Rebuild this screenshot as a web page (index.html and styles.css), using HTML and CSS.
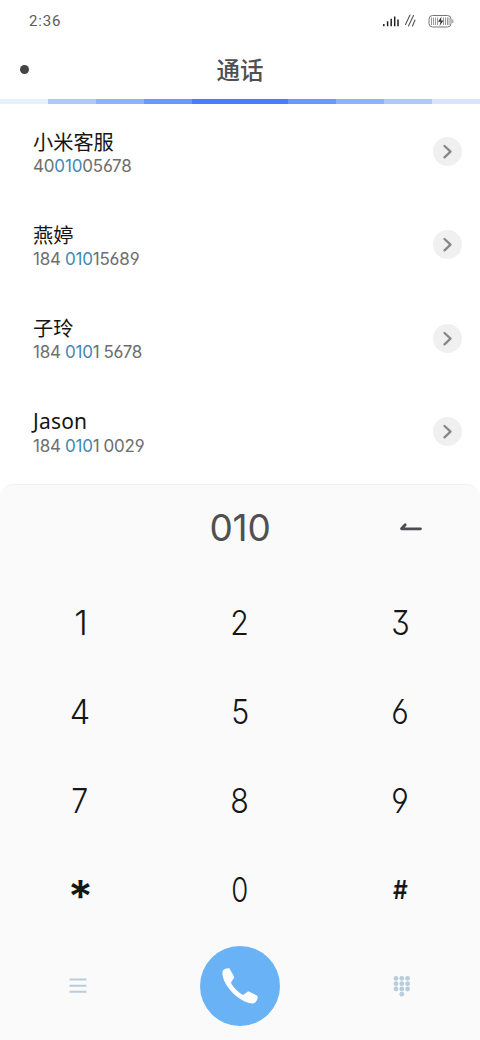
FILE: index.html
```html
<!DOCTYPE html>
<html lang="zh-CN">
<head>
<meta charset="utf-8">
<title>通话</title>
<link rel="stylesheet" href="styles.css">
</head>
<body>
<div class="phone">
  <div class="status">
    <span class="time">2:36</span>
    <svg class="status-icons" width="72" height="16" viewBox="0 0 72 16">
      <path d="M1.800 13.300V11M5.600 13.300V8.200M9.200 13.300V5.800M12.700 13.300V3.500M16 13.300V6.500" stroke="#222" stroke-width="1.500" fill="none"/>
      <path d="M23.500 11.500 28 2M26.500 13 31.500 2.500M30.500 13 33 7" stroke="#555" stroke-width="1.100" fill="none" stroke-linecap="round"/>
      <rect x="47" y="2.500" width="22" height="11.500" rx="3.500" fill="#fff" stroke="#777" stroke-width="1"/>
      <path d="M49.500 4.500V12M51.500 4.500V12M53.500 4.500V12M55.500 4.500V12M61.500 4.500V12M63.500 4.500V12M65.500 4.500V12M67 4.500V12" stroke="#999" stroke-width="1"/>
      <path d="M59.500 3.500 56 8.700H58.500L57.500 13 61.500 7.500H59Z" fill="#333"/>
      <path d="M70.800 6.500V10" stroke="#888" stroke-width="1"/>
    </svg>
  </div>
  <header class="header">
    <span class="dot"></span>
    <h1>通话</h1>
  </header>
  <div class="strip"><i class="s1"></i><i class="s2"></i><i class="s3"></i><i class="s4"></i><i class="s5"></i><i class="s5"></i><i class="s4"></i><i class="s3"></i><i class="s2"></i><i class="s6"></i></div>
  <ul class="contacts">
    <li><div class="who"><p class="name">小米客服</p><p class="number">40<b>010</b>05678</p></div><span class="go"><svg width="29" height="29" viewBox="0 0 29 29"><path d="M11.500 9 17.500 14.700 11.500 20.400"/></svg></span></li>
    <li><div class="who"><p class="name">燕婷</p><p class="number">184 <b>010</b>15689</p></div><span class="go"><svg width="29" height="29" viewBox="0 0 29 29"><path d="M11.500 9 17.500 14.700 11.500 20.400"/></svg></span></li>
    <li><div class="who"><p class="name">子玲</p><p class="number">184 <b>010</b>1 5678</p></div><span class="go"><svg width="29" height="29" viewBox="0 0 29 29"><path d="M11.500 9 17.500 14.700 11.500 20.400"/></svg></span></li>
    <li><div class="who"><p class="name latin">Jason</p><p class="number">184 <b>010</b>1 0029</p></div><span class="go"><svg width="29" height="29" viewBox="0 0 29 29"><path d="M11.500 9 17.500 14.700 11.500 20.400"/></svg></span></li>
  </ul>
  <section class="dialer">
    <div class="entry">
      <span class="typed">010</span>
      <svg class="back" width="24" height="12" viewBox="0 0 24 12"><path d="M6.200 2.700 2.500 6.800H21.500" fill="none" stroke="#4b4d50" stroke-width="2.800" stroke-linecap="round" stroke-linejoin="round"/></svg>
    </div>
    <div class="keys">
      <span><em class="one">1</em></span><span><em>2</em></span><span><em>3</em></span>
      <span><em class="four">4</em></span><span><em>5</em></span><span><em>6</em></span>
      <span><em>7</em></span><span><em>8</em></span><span><em>9</em></span>
      <span><em class="star">*</em></span><span><em class="zero">0</em></span><span><em class="hash">#</em></span>
    </div>
    <div class="actions">
      <svg class="menu" width="18" height="16" viewBox="0 0 18 16"><path d="M.5 1.500H17.500M.5 7.700H17.500M.5 13.700H17.500" stroke="#b7cddb" stroke-width="2"/></svg>
      <span class="call"><svg width="36" height="36" viewBox="0 0 36 36"><path d="M1 2.300C2.500.7 5.500-.2 7.400.3L12.400 9.200 8.900 14.700C11.300 19.200 16.500 24.500 21 27L26.300 23.200 35.300 27.700C36.600 29.300 34.800 33.500 32.500 34.900C29.800 36.300 23 34.800 15.500 29.100C7.500 23 1.100 13.500.5 6.500C.4 4.800.3 3.200 1 2.300Z" fill="#fff"/></svg></span>
      <svg class="pad" width="18" height="22" viewBox="0 0 18 22" fill="#b7cddb"><circle cx="3" cy="3.300" r="2.400"/><circle cx="8.800" cy="3.300" r="2.400"/><circle cx="14.600" cy="3.300" r="2.400"/><circle cx="3" cy="8.700" r="2.400"/><circle cx="8.800" cy="8.700" r="2.400"/><circle cx="14.600" cy="8.700" r="2.400"/><circle cx="3" cy="14" r="2.400"/><circle cx="8.800" cy="14" r="2.400"/><circle cx="14.600" cy="14" r="2.400"/><circle cx="8.800" cy="19.200" r="2.400"/></svg>
    </div>
  </section>
</div>
</body>
</html>
```

FILE: styles.css
```css
* { box-sizing: border-box; margin: 0; padding: 0; }
body { background: #fff; font-family: Inter, "Noto Sans CJK SC", sans-serif; }
.phone { width: 480px; height: 1040px; display: flex; flex-direction: column; background: #fff; }
.status { height: 42px; padding: 0 26px 0 29px; display: flex; justify-content: space-between; align-items: center; }
.time { font: 450 15px/20px Roboto, sans-serif; letter-spacing: .8px; color: #5c5c5c; }
.status-icons { margin-top: -1px; }
.header { height: 57px; display: grid; grid-template-columns: 1fr auto 1fr; align-items: center; padding-bottom: 3px; }
.dot { width: 9px; height: 9px; border-radius: 50%; background: #444; margin-left: 20px; }
.header h1 { font: 500 23.500px/34px "Noto Sans CJK SC", sans-serif; color: #505050; }
.strip { height: 5px; margin-bottom: 1px; display: grid; grid-template-columns: repeat(10, 1fr); }
.s1 { background: #e8f0fe; }
.s2 { background: #afc9fe; }
.s3 { background: #8eb2fd; }
.s4 { background: #6a99fc; }
.s5 { background: #457ffa; }
.s6 { background: #d9e5fe; }
.contacts { list-style: none; height: 379px; }
.contacts li { height: 93.300px; padding: 0 18px 0 33px; display: flex; justify-content: space-between; align-items: center; }
.who { padding-top: 3px; }
.name { font: 400 20.200px/26px "Noto Sans CJK SC", sans-serif; color: #151515; }
.latin { font-family: "Noto Sans", sans-serif; font-size: 21px; line-height: 24px; padding-bottom: 2px; letter-spacing: .2px; }
.number { font: 400 17px/23px Inter, sans-serif; letter-spacing: -.18px; color: #6e6e6e; white-space: pre; font-feature-settings: "cv03", "cv04"; word-spacing: -.6px; }
.number b { font-weight: 400; color: #4487b4; }
.go { width: 29px; height: 29px; border-radius: 50%; background: #f0f0f0; }
.go svg { display: block; }
.go path { fill: none; stroke: #888; stroke-width: 2.300; stroke-linecap: round; stroke-linejoin: round; }
.dialer { height: 556px; background: #fafafa; border-top: 1px solid #f1f1f1; border-radius: 14px 14px 0 0; }
.entry { height: 93px; display: grid; grid-template-columns: 180px 120px 180px; align-items: center; padding-bottom: 7px; }
.typed { grid-column: 2; text-align: center; font: 400 37px/44px Inter, sans-serif; letter-spacing: -.2px; color: #505050; }
.back { margin-left: 99px; }
.keys { display: grid; grid-template-columns: 160px 160px 160px; grid-auto-rows: 89px; }
.keys span { display: flex; align-items: center; justify-content: center; }
.keys em { font: 350 34.500px/40px Inter, sans-serif; font-feature-settings: "cv03", "cv04", "cv09"; transform: scaleX(.88); color: #161616; }
.keys .one { transform: translateX(1px); }
.keys .four { transform: scaleX(.94); }
.keys .zero { transform: scaleX(.8); }
.keys .star { font: 600 42px/40px Inter, sans-serif; transform: translateY(7px) scale(1.120, 1.060); }
.keys .hash { font: 600 26px/40px Inter, sans-serif; }
.actions { height: 106px; display: grid; grid-template-columns: 160px 160px 160px; align-items: center; padding-bottom: 2px; }
.menu { margin-left: 69px; }
.call { width: 80px; height: 80px; border-radius: 50%; background: #68b2f5; display: flex; align-items: center; justify-content: center; margin: 0 auto; }
.pad { margin-left: 73px; }
```
